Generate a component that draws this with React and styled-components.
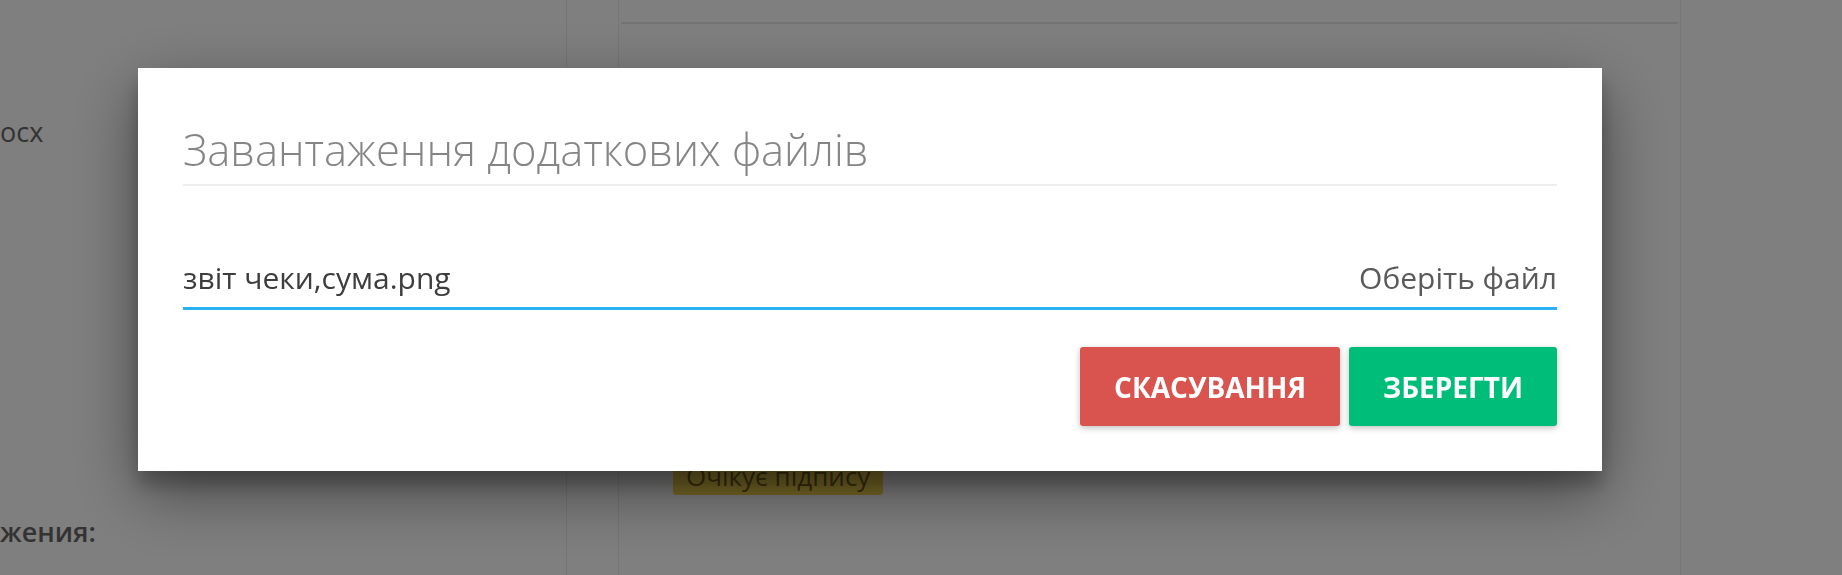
import React from "react";
import styled, { createGlobalStyle } from "styled-components";

const GlobalStyle = createGlobalStyle`
  html, body {
    margin: 0;
    padding: 0;
  }
  body {
    font-family: "Open Sans", "Noto Sans", "Liberation Sans", sans-serif;
    background: #fff;
    overflow: hidden;
  }
`;

export default function App() {
  return (
    <>
      <GlobalStyle />
      <Page>
        <Sidebar>
          <SideLabel>осх</SideLabel>
          <SideLabel $strong>жения:</SideLabel>
        </Sidebar>
        <Card>
          <CardHead />
          <CardBody>
            <Badge>Очікує підпису</Badge>
          </CardBody>
        </Card>
      </Page>

      <Backdrop>
        <Dialog>
          <Title>Завантаження додаткових файлів</Title>
          <FileField>
            <FileName>звіт чеки,сума.png</FileName>
            <Browse>Оберіть файл</Browse>
          </FileField>
          <Actions>
            <ActionButton $color="#d9534f">Скасування</ActionButton>
            <ActionButton $color="#00bd79">Зберегти</ActionButton>
          </Actions>
        </Dialog>
      </Backdrop>
    </>
  );
}

const Page = styled.div`
  display: flex;
  height: 575px;
  overflow: hidden;
  background: #fff;
`;

const Sidebar = styled.div`
  width: 567px;
  flex-shrink: 0;
  display: flex;
  flex-direction: column;
  gap: 363px;
  padding-top: 113px;
  border-right: 1px solid #ececec;
  box-sizing: border-box;
`;

const SideLabel = styled.div`
  font-size: 27px;
  line-height: 37px;
  font-weight: ${(p) => (p.$strong ? 600 : 400)};
  color: #666;
  white-space: nowrap;
`;

const Card = styled.div`
  width: 1063px;
  margin-left: 51px;
  flex-shrink: 0;
  border-left: 1px solid #ececec;
  border-right: 1px solid #ececec;
  box-sizing: border-box;
`;

const CardHead = styled.div`
  height: 22px;
  margin: 0 2px;
  border-bottom: 2px solid #e6e6e6;
`;

const CardBody = styled.div`
  padding: 434px 0 0 54px;
`;

const Badge = styled.span`
  display: inline-block;
  padding: 2px 13px;
  border-radius: 3px;
  background: #f6d64f;
  color: #7a6016;
  font-size: 26px;
  line-height: 33px;
`;

const Backdrop = styled.div`
  position: fixed;
  inset: 0;
  background: rgba(0, 0, 0, 0.5);
  padding: 68px 0 0 138px;
`;

const Dialog = styled.div`
  width: 1464px;
  box-sizing: border-box;
  padding: 53px 45px 45px;
  background: #fff;
  box-shadow: 0 22px 60px rgba(0, 0, 0, 0.45), 0 14px 16px rgba(0, 0, 0, 0.22);
`;

const Title = styled.h2`
  margin: 0;
  padding-bottom: 5px;
  border-bottom: 2px solid #eeeeee;
  font-size: 43.5px;
  line-height: 58px;
  font-weight: 300;
  color: #858585;
`;

const FileField = styled.div`
  display: flex;
  justify-content: space-between;
  align-items: baseline;
  margin-top: 71px;
  padding-bottom: 9px;
  border-bottom: 3px solid #2bb0f5;
  font-size: 30px;
  line-height: 41px;
`;

const FileName = styled.span`
  color: #3d3d3d;
`;

const Browse = styled.span`
  color: #5a5a5a;
`;

const Actions = styled.div`
  display: flex;
  justify-content: flex-end;
  gap: 9px;
  margin-top: 37px;
`;

const ActionButton = styled.button`
  height: 79px;
  padding: 0 34px;
  border: none;
  border-radius: 3px;
  background: ${(p) => p.$color};
  color: #fff;
  font-family: inherit;
  font-size: 28px;
  font-weight: 700;
  text-transform: uppercase;
  box-shadow: 0 2px 6px rgba(0, 0, 0, 0.25);
  cursor: pointer;
`;
